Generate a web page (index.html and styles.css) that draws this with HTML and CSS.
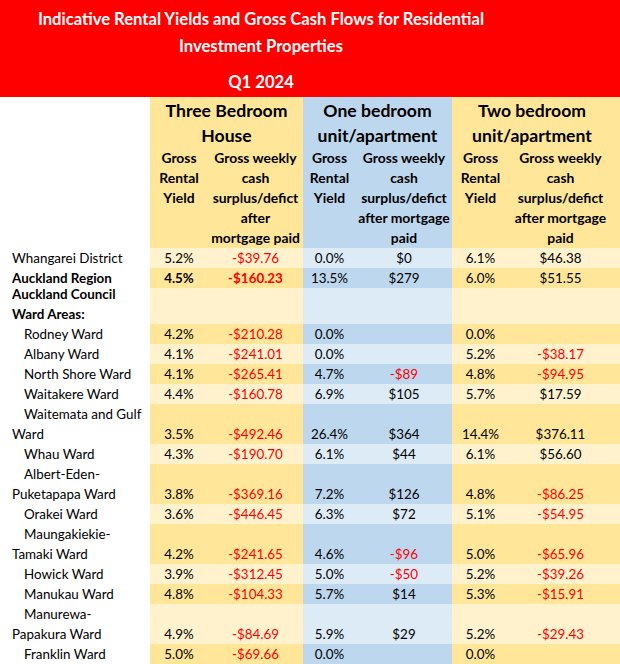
FILE: index.html
```html
<!DOCTYPE html>
<html>
<head>
<meta charset="utf-8">
<link rel="stylesheet" href="styles.css">
</head>
<body>
<div class="title">
  <div class="title-main">Indicative Rental Yields and Gross Cash Flows for Residential<br>Investment Properties</div>
  <div class="title-q">Q1 2024</div>
</div>
<div class="table">
  <div class="c blank"></div>
  <div class="c gh y span2">Three Bedroom<br>House</div>
  <div class="c gh b span2">One bedroom<br>unit/apartment</div>
  <div class="c gh y span2 last">Two bedroom<br>unit/apartment</div>

  <div class="c blank"></div>
  <div class="c sh y">Gross<br>Rental<br>Yield</div>
  <div class="c sh y">Gross weekly<br>cash<br>surplus/defict<br>after<br>mortgage paid</div>
  <div class="c sh b">Gross<br>Rental<br>Yield</div>
  <div class="c sh b">Gross weekly<br>cash<br>surplus/defict<br>after mortgage<br>paid</div>
  <div class="c sh y">Gross<br>Rental<br>Yield</div>
  <div class="c sh y last">Gross weekly<br>cash<br>surplus/defict<br>after mortgage<br>paid</div>

  <!-- Whangarei -->
  <div class="c lbl">Whangarei District</div>
  <div class="c v yl">5.2%</div><div class="c v yl neg">-$39.76</div>
  <div class="c v bl">0.0%</div><div class="c v bl">$0</div>
  <div class="c v yl">6.1%</div><div class="c v yl last">$46.38</div>

  <div class="c lbl bold">Auckland Region</div>
  <div class="c v yd bold">4.5%</div><div class="c v yd neg bold">-$160.23</div>
  <div class="c v bd">13.5%</div><div class="c v bd">$279</div>
  <div class="c v yd">6.0%</div><div class="c v yd last">$51.55</div>

  <div class="c lbl bold h36">Auckland Council<br>Ward Areas:</div>
  <div class="c v yl"></div><div class="c v yl"></div>
  <div class="c v bl"></div><div class="c v bl"></div>
  <div class="c v yl"></div><div class="c v yl last"></div>

  <div class="c lbl ind">Rodney Ward</div>
  <div class="c v yd">4.2%</div><div class="c v yd neg">-$210.28</div>
  <div class="c v bd">0.0%</div><div class="c v bd"></div>
  <div class="c v yd">0.0%</div><div class="c v yd last"></div>

  <div class="c lbl ind">Albany Ward</div>
  <div class="c v yl">4.1%</div><div class="c v yl neg">-$241.01</div>
  <div class="c v bl">0.0%</div><div class="c v bl"></div>
  <div class="c v yl">5.2%</div><div class="c v yl last neg">-$38.17</div>

  <div class="c lbl ind">North Shore Ward</div>
  <div class="c v yd">4.1%</div><div class="c v yd neg">-$265.41</div>
  <div class="c v bd">4.7%</div><div class="c v bd neg">-$89</div>
  <div class="c v yd">4.8%</div><div class="c v yd last neg">-$94.95</div>

  <div class="c lbl ind">Waitakere Ward</div>
  <div class="c v yl">4.4%</div><div class="c v yl neg">-$160.78</div>
  <div class="c v bl">6.9%</div><div class="c v bl">$105</div>
  <div class="c v yl">5.7%</div><div class="c v yl last">$17.59</div>

  <div class="c lbl ind h38">Waitemata and Gulf<br>Ward</div>
  <div class="c v yd">3.5%</div><div class="c v yd neg">-$492.46</div>
  <div class="c v bd">26.4%</div><div class="c v bd">$364</div>
  <div class="c v yd">14.4%</div><div class="c v yd last">$376.11</div>

  <div class="c lbl ind">Whau Ward</div>
  <div class="c v yl">4.3%</div><div class="c v yl neg">-$190.70</div>
  <div class="c v bl">6.1%</div><div class="c v bl">$44</div>
  <div class="c v yl">6.1%</div><div class="c v yl last">$56.60</div>

  <div class="c lbl ind h38">Albert-Eden-<br>Puketapapa Ward</div>
  <div class="c v yd">3.8%</div><div class="c v yd neg">-$369.16</div>
  <div class="c v bd">7.2%</div><div class="c v bd">$126</div>
  <div class="c v yd">4.8%</div><div class="c v yd last neg">-$86.25</div>

  <div class="c lbl ind">Orakei Ward</div>
  <div class="c v yl">3.6%</div><div class="c v yl neg">-$446.45</div>
  <div class="c v bl">6.3%</div><div class="c v bl">$72</div>
  <div class="c v yl">5.1%</div><div class="c v yl last neg">-$54.95</div>

  <div class="c lbl ind h40">Maungakiekie-<br>Tamaki Ward</div>
  <div class="c v yd">4.2%</div><div class="c v yd neg">-$241.65</div>
  <div class="c v bd">4.6%</div><div class="c v bd neg">-$96</div>
  <div class="c v yd">5.0%</div><div class="c v yd last neg">-$65.96</div>

  <div class="c lbl ind">Howick Ward</div>
  <div class="c v yl">3.9%</div><div class="c v yl neg">-$312.45</div>
  <div class="c v bl">5.0%</div><div class="c v bl neg">-$50</div>
  <div class="c v yl">5.2%</div><div class="c v yl last neg">-$39.26</div>

  <div class="c lbl ind">Manukau Ward</div>
  <div class="c v yd">4.8%</div><div class="c v yd neg">-$104.33</div>
  <div class="c v bd">5.7%</div><div class="c v bd">$14</div>
  <div class="c v yd">5.3%</div><div class="c v yd last neg">-$15.91</div>

  <div class="c lbl ind h43">Manurewa-<br>Papakura Ward</div>
  <div class="c v yl">4.9%</div><div class="c v yl neg">-$84.69</div>
  <div class="c v bl">5.9%</div><div class="c v bl">$29</div>
  <div class="c v yl">5.2%</div><div class="c v yl last neg">-$29.43</div>

  <div class="c lbl ind h21">Franklin Ward</div>
  <div class="c v yd">5.0%</div><div class="c v yd neg">-$69.66</div>
  <div class="c v bd">0.0%</div><div class="c v bd"></div>
  <div class="c v yd">0.0%</div><div class="c v yd last"></div>
</div>
</body>
</html>
```
FILE: styles.css
```css
html, body {
  margin: 0;
  padding: 0;
  background: #ffffff;
}
body {
  width: 620px;
  height: 664px;
  overflow: hidden;
  font-family: Lato, "Open Sans", sans-serif;
  color: #000000;
}
.title {
  background: #ff0000;
  color: #ffffff;
  font-weight: bold;
  font-size: 16.6px;
  text-align: center;
  height: 97px;
  box-sizing: border-box;
  padding: 6px 98px 0 0;
}
.title-main {
  line-height: 27px;
}
.title-q {
  line-height: 27px;
  padding-top: 9px;
}
.table {
  display: grid;
  grid-template-columns: 150px 58px 95px 53px 96px 57px 111px;
}
.c {
  display: flex;
  align-items: flex-end;
  justify-content: center;
  text-align: center;
  font-size: 13.4px;
  line-height: 20px;
  white-space: nowrap;
  height: 20px;
}
.span2 {
  grid-column: span 2;
}
.blank {
  background: #ffffff;
  height: auto;
}
.gh {
  height: 51px;
  align-items: flex-start;
  padding-top: 1px;
  box-sizing: border-box;
  font-size: 17.6px;
  font-weight: bold;
  line-height: 25px;
}
.sh {
  height: 100px;
  align-items: flex-start;
  font-size: 13.9px;
  font-weight: bold;
}
.y { background: #ffe699; }
.b { background: #bdd7ee; }
.yd { background: #ffe699; }
.yl { background: #fff2cc; }
.bd { background: #bdd7ee; }
.bl { background: #ddebf7; }
.last {
  padding-right: 8px;
}
.lbl {
  justify-content: flex-start;
  text-align: left;
  padding-left: 12px;
  background: #ffffff;
}
.ind {
  text-indent: 12px;
}
.lbl.ind {
  display: block;
  align-self: end;
  height: auto;
}
.bold {
  font-weight: bold;
}
.neg {
  color: #ff0000;
}
.h21 { height: 21px; }
.h36 { height: 36px; }
.h38 { height: 38px; }
.h40 { height: 40px; }
.h43 { height: 43px; }
.v {
  height: auto;
  min-height: 20px;
}
```
